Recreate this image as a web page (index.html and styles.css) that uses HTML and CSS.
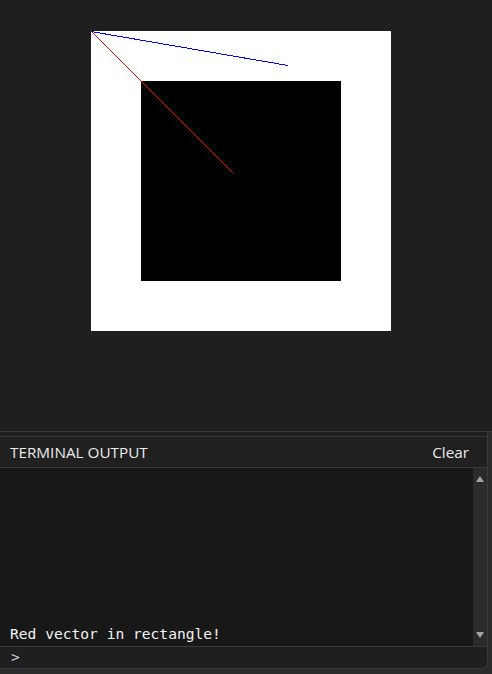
FILE: index.html
```html
<!DOCTYPE html>
<html>
<head>
<meta charset="utf-8">
<link rel="stylesheet" href="styles.css">
</head>
<body>
<div class="stage">
  <svg class="canvas" width="300" height="300" viewBox="0 0 300 300" shape-rendering="crispEdges">
    <rect x="0" y="0" width="300" height="300" fill="#ffffff"/>
    <rect x="50" y="50" width="200" height="200" fill="#000000"/>
    <line x1="0" y1="0.5" x2="197" y2="34.5" stroke="#0000ff" stroke-width="1"/>
    <line x1="0" y1="0" x2="142" y2="142" stroke="#ff0000" stroke-width="1"/>
  </svg>
</div>
<div class="dock">
  <div class="terminal">
    <div class="term-head">
      <span class="term-title">TERMINAL OUTPUT</span>
      <span class="term-clear">Clear</span>
    </div>
    <div class="term-body">
      <div class="term-log">
        <div class="term-line">Red vector in rectangle!</div>
      </div>
      <div class="scrollbar">
        <span class="arrow up"></span>
        <span class="arrow down"></span>
      </div>
    </div>
    <div class="term-input"><span class="prompt">&gt;</span></div>
  </div>
</div>
</body>
</html>
```
FILE: styles.css
```css
html, body {
  margin: 0;
  padding: 0;
  background: #2b2b2b;
  width: 492px;
  height: 674px;
  overflow: hidden;
}
.stage {
  height: 432px;
  box-sizing: border-box;
  background: #1f1f1f;
  border-bottom: 1px solid #3a3a3a;
  display: flex;
  justify-content: center;
  align-items: flex-start;
  padding-right: 10px;
}
.canvas {
  display: block;
  margin-top: 31px;
}
.dock {
  height: 242px;
  display: flex;
  align-items: flex-start;
}
.terminal {
  width: 488px;
  height: 237px;
  box-sizing: border-box;
  background: #1f1f1f;
  border-right: 1px solid #3a3a3a;
  border-bottom: 1px solid #3a3a3a;
  border-bottom-right-radius: 7px;
  padding-top: 4px;
  display: flex;
  flex-direction: column;
  overflow: hidden;
}
.term-head {
  height: 32px;
  box-sizing: border-box;
  border-top: 1px solid #3a3a3a;
  border-bottom: 1px solid #3a3a3a;
  background: #202020;
  display: flex;
  align-items: center;
  justify-content: space-between;
  padding: 0 18px 1px 10px;
  font-family: "Open Sans", "Noto Sans", sans-serif;
  font-size: 15.3px;
  color: #ececec;
  flex: none;
}
.term-body {
  height: 179px;
  box-sizing: border-box;
  display: flex;
  background: #181818;
  border-bottom: 1px solid #3a3a3a;
  flex: none;
}
.term-log {
  flex: 1;
  display: flex;
  flex-direction: column;
  justify-content: flex-end;
  padding: 0 10px 3px;
}
.term-line {
  font-family: "DejaVu Sans Mono", "Liberation Mono", monospace;
  font-size: 14.6px;
  line-height: 18px;
  color: #f2f2f2;
  white-space: pre;
}
.scrollbar {
  width: 14px;
  background: #2b2b2b;
  display: flex;
  flex-direction: column;
  justify-content: space-between;
  align-items: center;
  padding: 8px 0 8px;
  box-sizing: border-box;
}
.arrow {
  width: 0;
  height: 0;
  border-left: 4.5px solid transparent;
  border-right: 4.5px solid transparent;
}
.arrow.up {
  border-bottom: 6px solid #a3a3a3;
}
.arrow.down {
  border-top: 6px solid #a3a3a3;
}
.term-input {
  flex: 1;
  display: flex;
  align-items: center;
  padding-left: 11px;
  background: #1f1f1f;
}
.prompt {
  font-family: "DejaVu Sans Mono", monospace;
  font-size: 14.5px;
  line-height: 1;
  color: #d0d0d0;
}
```
